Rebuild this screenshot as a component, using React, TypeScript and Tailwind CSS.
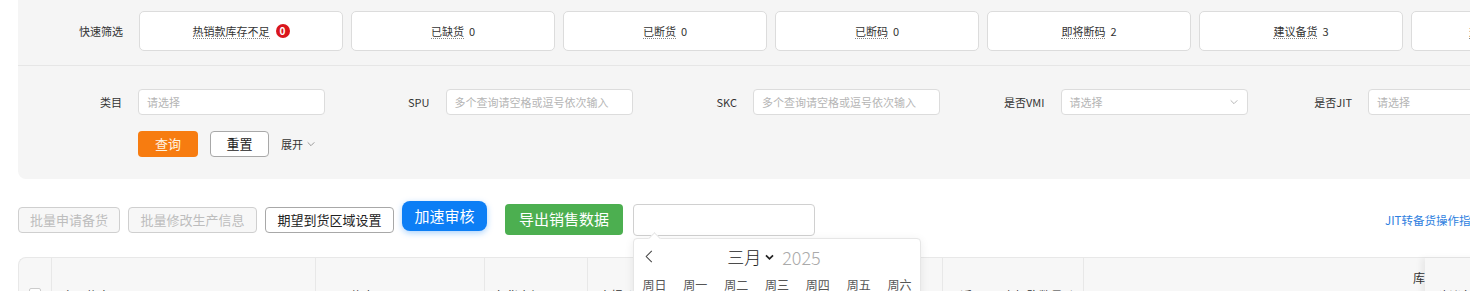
import React from "react";

const cards: { label: string; value: string; badge?: boolean }[] = [
  { label: "热销款库存不足", value: "0", badge: true },
  { label: "已缺货", value: "0" },
  { label: "已断货", value: "0" },
  { label: "已断码", value: "0" },
  { label: "即将断码", value: "2" },
  { label: "建议备货", value: "3" },
  { label: "热销款即将缺货", value: "1" },
];

const fields: { label: string; placeholder: string; select?: boolean }[] = [
  { label: "类目", placeholder: "请选择" },
  { label: "SPU", placeholder: "多个查询请空格或逗号依次输入" },
  { label: "SKC", placeholder: "多个查询请空格或逗号依次输入" },
  { label: "是否VMI", placeholder: "请选择", select: true },
  { label: "是否JIT", placeholder: "请选择" },
];

const weekdays = ["周日", "周一", "周二", "周三", "周四", "周五", "周六"];

function ChevronDown({ className }: { className?: string }) {
  return (
    <svg viewBox="0 0 12 12" className={className} fill="none" stroke="currentColor" strokeWidth="1">
      <path d="M2 4l4 4 4-4" />
    </svg>
  );
}

export default function App() {
  return (
    <div className="relative w-[1470px] h-[291px] overflow-hidden bg-white font-['Noto_Sans_CJK_SC','Noto_Sans',sans-serif] text-[#333]">
      {/* filter panel */}
      <div className="ml-[18px] w-[1500px] bg-[#f5f5f5] rounded-bl-[8px]">
        {/* quick filter */}
        <div className="flex h-[66px] border-b border-[#e6e6e6] pt-[11px]">
          <div className="w-[105px] shrink-0 text-right text-[11px] leading-[40px] text-[#333]">快速筛选</div>
          <div className="ml-[16px] flex gap-[8px]">
            {cards.map((c) => (
              <div
                key={c.label}
                className="flex h-[40px] w-[204px] shrink-0 items-center justify-center rounded-[5px] border border-[#dcdcdc] bg-white text-[11px] text-[#333]"
              >
                <span className="border-b border-dotted border-[#888] leading-[14px]">{c.label}</span>
                {c.badge ? (
                  <span className="ml-[6px] flex h-[14px] w-[14px] items-center justify-center rounded-full bg-[#d9161c] text-[10px] font-bold leading-none text-white">
                    {c.value}
                  </span>
                ) : (
                  <span className="ml-[5px] leading-[14px]">{c.value}</span>
                )}
              </div>
            ))}
          </div>
        </div>

        {/* form */}
        <div className="flex pt-[23px]">
          {fields.map((f) => (
            <div key={f.label} className="flex w-[307.5px] shrink-0 items-center">
              <div className="w-[104px] shrink-0 text-right text-[11px] text-[#333]">{f.label}</div>
              <div className="ml-[16px] flex h-[26px] w-[187px] shrink-0 items-center justify-between rounded-[4px] border border-[#dcdcdc] bg-white px-[8px] text-[11px] text-[#b5b5b5]">
                <span>{f.placeholder}</span>
                {f.select && <ChevronDown className="h-[10px] w-[10px] text-[#aaa]" />}
              </div>
            </div>
          ))}
        </div>
        <div className="flex items-center pb-[22px] pl-[120px] pt-[16px]">
          <button className="h-[26px] w-[60px] shrink-0 rounded-[4px] bg-[#f77c10] text-[13px] text-[#fff4e2]">查询</button>
          <button className="ml-[12px] h-[26px] w-[59px] shrink-0 rounded-[4px] border border-[#a8a8a8] bg-white text-[13px] text-[#222]">重置</button>
          <span className="ml-[12px] flex items-center text-[11px] text-[#333]">
            展开
            <ChevronDown className="ml-[3px] h-[10px] w-[10px] text-[#888]" />
          </span>
        </div>
      </div>

      {/* toolbar */}
      <div className="ml-[18px] mt-[22px] flex w-[1500px] items-start">
        <button className="mt-[6px] h-[26px] w-[102px] shrink-0 rounded-[4px] border border-[#cfcfcf] bg-[#f7f7f7] text-[13px] text-[#bdbdbd]">批量申请备货</button>
        <button className="ml-[8px] mt-[6px] h-[26px] w-[129px] shrink-0 rounded-[4px] border border-[#cfcfcf] bg-[#f7f7f7] text-[13px] text-[#bdbdbd]">批量修改生产信息</button>
        <button className="ml-[8px] mt-[6px] h-[26px] w-[129px] shrink-0 rounded-[4px] border border-[#a8a8a8] bg-white text-[13px] text-[#222]">期望到货区域设置</button>
        <button className="ml-[8px] h-[30px] w-[85px] shrink-0 rounded-[8px] bg-[#0c7ef5] text-[15px] text-white shadow-[0_2px_6px_rgba(12,126,245,0.35)]">加速审核</button>
        <button className="ml-[18px] mt-[3px] h-[31px] w-[118px] shrink-0 rounded-[4px] bg-[#4caf50] text-[15px] text-white">导出销售数据</button>
        <div className="ml-[10px] mt-[3px] h-[32px] w-[182px] shrink-0 rounded-[4px] border border-[#d0d0d0] bg-white" />
        <span className="ml-[570px] mt-[11px] shrink-0 whitespace-nowrap text-[11.5px] text-[#2f7fe0]">JIT转备货操作指南</span>
      </div>

      {/* table header */}
      <div className="ml-[18px] mt-[21px] flex h-[80px] w-[1500px] rounded-tl-[8px] border-l border-t border-[#e8e8e8] bg-[#f7f7f7] text-[12px] text-[#333]">
        <div className="flex w-[33px] shrink-0 justify-center border-r border-[#e8e8e8] pt-[30px]">
          <div className="h-[12px] w-[12px] rounded-[2px] border border-[#ccc] bg-white" />
        </div>
        <div className="w-[264px] shrink-0 border-r border-[#e8e8e8] pl-[10px] pt-[29px]">产品信息</div>
        <div className="w-[169px] shrink-0 border-r border-[#e8e8e8] pl-[11px] pt-[29px]">SKU信息</div>
        <div className="w-[103px] shrink-0 border-r border-[#e8e8e8] pl-[9px] pt-[29px]">备货金级</div>
        <div className="w-[355px] shrink-0 border-r border-[#e8e8e8] pl-[11px] pt-[29px]">申报价格</div>
        <div className="w-[141px] shrink-0 border-r border-[#e8e8e8] pl-[17px] pt-[29px]">近7日用户加购数量 ▲</div>
        <div className="w-[341px] shrink-0 pt-[11px] text-right">
          <span className="mr-[-12px]">库存</span>
        </div>
        <div className="relative z-10 w-[200px] shrink-0 bg-[#f7f7f7] pl-[12px] pt-[29px] shadow-[-4px_0_6px_rgba(0,0,0,0.06)]">建议备货数量</div>
      </div>

      {/* calendar popup */}
      <div className="absolute left-[633px] top-[238px] z-20 h-[80px] w-[288px] rounded-[4px] border border-[#e6e6e6] bg-white shadow-[0_2px_10px_rgba(0,0,0,0.08)]">
        <div className="absolute left-[16px] top-[-5px] h-[9px] w-[9px] rotate-45 border-l border-t border-[#e6e6e6] bg-white" />
        <div className="relative flex h-[36px] items-center justify-center">
          <svg viewBox="0 0 8 14" className="absolute left-[11px] top-[11px] h-[13px] w-[8px] text-[#444]" fill="none" stroke="currentColor" strokeWidth="1.1">
            <path d="M7 1L1 7l6 6" />
          </svg>
          <div className="ml-[-6px] flex items-center">
            <span className="text-[17px] font-light text-[#222]">三月</span>
            <svg viewBox="0 0 10 8" className="ml-[4px] h-[7px] w-[9px] text-[#222]" fill="none" stroke="currentColor" strokeWidth="2">
              <path d="M1 1.5l4 4 4-4" />
            </svg>
            <span className="ml-[8px] text-[18px] font-light text-[#aaa]">2025</span>
          </div>
        </div>
        <div className="grid grid-cols-7 pt-[1px] text-center text-[12px] text-[#555]">
          {weekdays.map((w) => (
            <span key={w}>{w}</span>
          ))}
        </div>
      </div>
    </div>
  );
}
